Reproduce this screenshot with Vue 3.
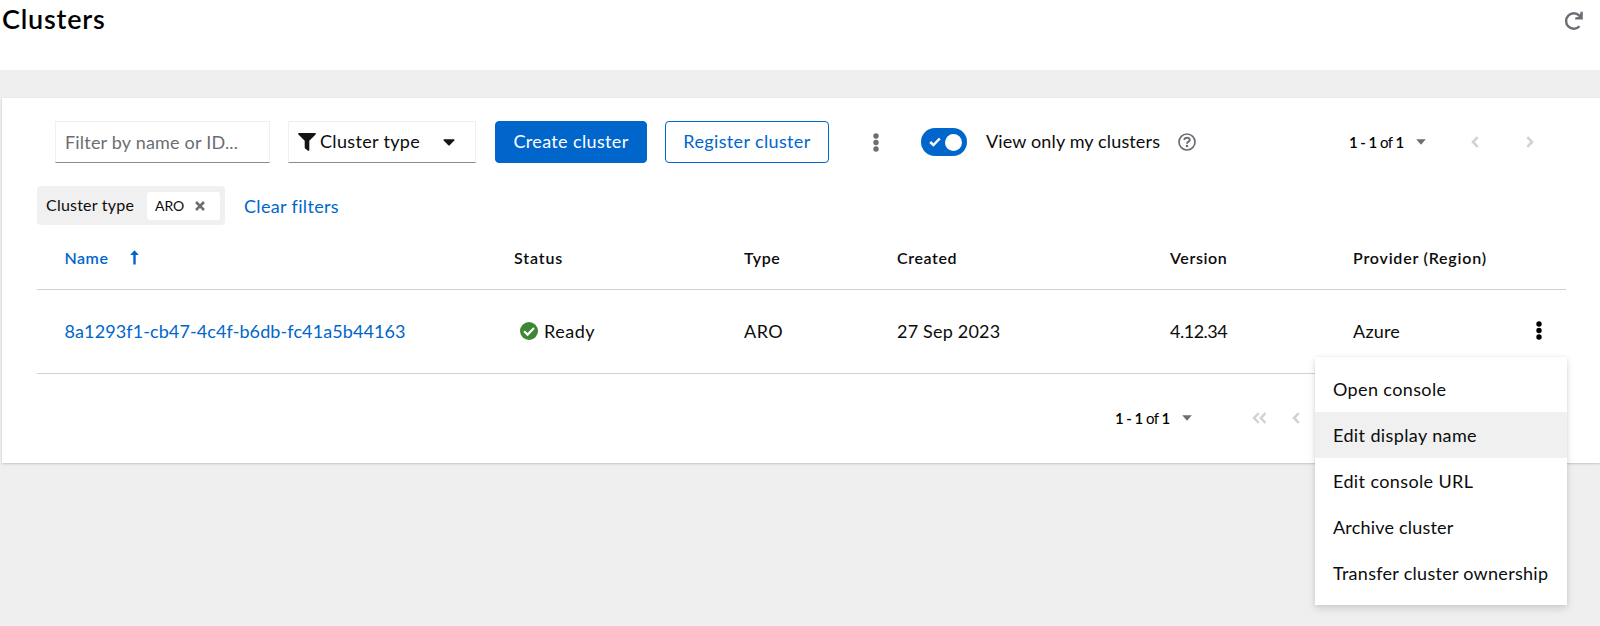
<script setup>
import { ref } from 'vue'

const filterText = ref('')
const onlyMine = ref(true)
const columns = [
  { key: 'status', label: 'Status' },
  { key: 'type', label: 'Type' },
  { key: 'created', label: 'Created' },
  { key: 'version', label: 'Version' },
  { key: 'provider', label: 'Provider (Region)' },
]
const clusters = [
  {
    name: '8a1293f1-cb47-4c4f-b6db-fc41a5b44163',
    status: 'Ready',
    type: 'ARO',
    created: '27 Sep 2023',
    version: '4.12.34',
    provider: 'Azure',
  },
]
const actions = [
  { label: 'Open console', key: 'open' },
  { label: 'Edit display name', key: 'rename', active: true },
  { label: 'Edit console URL', key: 'url' },
  { label: 'Archive cluster', key: 'archive' },
  { label: 'Transfer cluster ownership', key: 'transfer' },
]
</script>

<template>
  <div class="page">
    <header class="page-header">
      <h1>Clusters</h1>
      <button class="icon-btn refresh" aria-label="Refresh">
        <svg width="20" height="20" viewBox="0 0 20 20">
          <path d="M15.5 15.2A7.7 7.7 0 1 1 15.3 4.6L17 6.2" fill="none" stroke="#6a6e73" stroke-width="2.4" />
          <path d="M18.8 .8V8.4H11.2V6.6L15.6 5.6L16.6 .8Z" fill="#6a6e73" />
        </svg>
      </button>
    </header>

    <main class="card">
      <div class="toolbar">
        <input v-model="filterText" class="field filter" placeholder="Filter by name or ID..." />
        <button class="field select">
          <svg class="funnel" width="18" height="18" viewBox="0 0 18 18">
            <path d="M.9 0H17.1Q18.3 .4 17.6 1.4L11.3 7.8V17.2Q10.9 18.2 10 17.7L7.1 15.5Q6.7 15.2 6.7 14.6V7.8L.4 1.4Q-.3 .4 .9 0Z" fill="#151515" />
          </svg>
          <span>Cluster type</span>
          <svg class="select-caret" width="12" height="7" viewBox="0 0 12 7"><path d="M1 .2H11Q12 .6 11.3 1.4L6.7 6.2Q6 6.9 5.3 6.2L.7 1.4Q0 .6 1 .2Z" fill="#151515" /></svg>
        </button>
        <button class="btn primary">Create cluster</button>
        <button class="btn secondary">Register cluster</button>
        <button class="icon-btn tool-kebab" aria-label="More">
          <svg width="6" height="19" viewBox="0 0 6 19" fill="#6a6e73"><circle cx="3" cy="3" r="2.7" /><circle cx="3" cy="9.5" r="2.7" /><circle cx="3" cy="16" r="2.7" /></svg>
        </button>
        <button class="switch" :aria-pressed="onlyMine" aria-label="View only my clusters" @click="onlyMine = !onlyMine">
          <svg width="12" height="10" viewBox="0 0 12 10"><path d="M1.2 5L4.4 8.1L10.8 1.5" fill="none" stroke="#fff" stroke-width="2.5" /></svg>
          <span class="knob"></span>
        </button>
        <span class="switch-label">View only my clusters</span>
        <svg class="help" width="18" height="18" viewBox="0 0 18 18" fill="none" stroke="#6a6e73">
          <circle cx="9" cy="9" r="8" stroke-width="1.7" />
          <path d="M6.3 7C6.6 4.1 11.8 4 11.8 7C11.8 8.7 9 8.6 9 10.7" stroke-width="1.9" />
          <circle cx="9" cy="13" r="1.3" fill="#6a6e73" stroke="none" />
        </svg>
        <div class="pager pager-top">
          <span class="count"><b>1 - 1</b> of <b>1</b></span>
          <svg class="caret" width="10" height="6" viewBox="0 0 10 6"><path d="M.2 .2H9.8L5 5.8Z" fill="#6a6e73" /></svg>
          <svg class="prev" width="8" height="12" viewBox="0 0 8 12"><path d="M6.7 1.2L2 6L6.7 10.8" fill="none" stroke="#d2d2d2" stroke-width="2.6" /></svg>
          <svg class="next" width="8" height="12" viewBox="0 0 8 12"><path d="M1.3 1.2L6 6L1.3 10.8" fill="none" stroke="#d2d2d2" stroke-width="2.6" /></svg>
        </div>
      </div>

      <div class="filters">
        <div class="chip-group">
          <span class="chip-label">Cluster type</span>
          <span class="chip">
            <span class="chip-text">ARO</span>
            <svg width="10" height="10" viewBox="0 0 10 10"><path d="M1 1L9 9M9 1L1 9" stroke="#6a6e73" stroke-width="2.5" /></svg>
          </span>
        </div>
        <a class="clear">Clear filters</a>
      </div>

      <section class="table">
        <div class="row head">
          <span class="name sorted">
            Name
            <svg width="9" height="15" viewBox="0 0 9 15"><path d="M4.5 .2L8.4 4.4Q8.6 5.1 7.9 5.1H5.7V14.6H3.3V5.1H1.1Q.4 5.1 .6 4.4Z" fill="#06c" /></svg>
          </span>
          <span v-for="c in columns" :key="c.key" :class="'h-' + c.key">{{ c.label }}</span>
        </div>
        <div v-for="cluster in clusters" :key="cluster.name" class="row body">
          <a class="name">{{ cluster.name }}</a>
          <span class="status">
            <svg width="18" height="18" viewBox="0 0 18 18"><circle cx="9" cy="9" r="9" fill="#3e8635" /><path d="M4 9.2L7.6 12.6L14 6.1" fill="none" stroke="#fff" stroke-width="2.2" /></svg>
            {{ cluster.status }}
          </span>
          <span class="type">{{ cluster.type }}</span>
          <span>{{ cluster.created }}</span>
          <span class="version">{{ cluster.version }}</span>
          <span>{{ cluster.provider }}</span>
          <div class="row-actions">
            <button class="icon-btn" aria-label="Actions">
              <svg width="6" height="19" viewBox="0 0 6 19" fill="#000"><circle cx="3" cy="3" r="2.7" /><circle cx="3" cy="9.5" r="2.7" /><circle cx="3" cy="16" r="2.7" /></svg>
            </button>
            <ul class="menu">
              <li v-for="a in actions" :key="a.key" :class="[a.key, { active: a.active }]">{{ a.label }}</li>
            </ul>
          </div>
        </div>
      </section>

      <footer class="pager pager-bottom">
        <span class="count"><b>1 - 1</b> of <b>1</b></span>
        <svg class="caret" width="10" height="6" viewBox="0 0 10 6"><path d="M.2 .2H9.8L5 5.8Z" fill="#6a6e73" /></svg>
        <svg class="first" width="15" height="12" viewBox="0 0 15 12"><path d="M6.7 1.2L2 6L6.7 10.8M13.5 1.2L8.8 6L13.5 10.8" fill="none" stroke="#d2d2d2" stroke-width="2.4" /></svg>
        <svg class="before" width="8" height="12" viewBox="0 0 8 12"><path d="M6.7 1.2L2 6L6.7 10.8" fill="none" stroke="#d2d2d2" stroke-width="2.6" /></svg>
      </footer>
    </main>
  </div>
</template>

<style>
body { background: #efefef; }
</style>

<style scoped>
.page {
  height: 626px;
  overflow: hidden;
  background: #efefef;
  color: #0c0c0c;
  font-family: Lato, "Open Sans", sans-serif;
  font-size: 18px;
  letter-spacing: 0.2px;
}
.page * { box-sizing: border-box; }
button, input { font: inherit; letter-spacing: inherit; color: inherit; margin: 0; }
svg { flex: none; display: block; }
.page-header {
  display: flex;
  justify-content: space-between;
  height: 70px;
  padding: 4px 16px 0 2px;
  background: #fff;
}
h1 { margin: 0; font-size: 27px; line-height: 30px; font-weight: 600; letter-spacing: 0.8px; color: #000; }
.icon-btn { display: block; border: 0; padding: 0; background: none; }
.refresh { height: 20px; margin-top: 7px; }
.card {
  height: 365px;
  margin: 28px 0 0 2px;
  padding: 23px 0 0 35px;
  background: #fff;
  box-shadow: 0 1px 2px rgba(0, 0, 0, 0.16), 0 0 2px rgba(0, 0, 0, 0.05);
}
.toolbar { display: flex; align-items: center; height: 42px; padding-left: 18px; }
.field { height: 42px; border: 1px solid #f0f0f0; border-bottom-color: #8a8d90; background: #fff; }
.filter { width: 215px; padding: 0 9px 1px; outline: none; letter-spacing: 0.2px; }
.filter::placeholder { color: #6a6e73; opacity: 1; }
.select {
  display: flex;
  align-items: center;
  width: 188px;
  margin-left: 18px;
  padding: 0 20px 0 9px;
  letter-spacing: 0.33px;
}
.select span { margin-bottom: 2px; }
.funnel { margin: -1px 4px 0 0; }
.select-caret { margin-left: auto; }
.btn { height: 42px; border-radius: 4px; padding: 0 0 2px; letter-spacing: 0.36px; }
.primary { width: 152px; margin-left: 19px; border: 1px solid #06c; background: #06c; color: #fff; }
.secondary { width: 164px; margin-left: 18px; border: 1px solid #06c; background: #fff; color: #06c; }
.tool-kebab { margin: 0 0 0 43.5px; }
.switch {
  display: flex;
  align-items: center;
  justify-content: space-between;
  width: 46px;
  height: 28px;
  margin-left: 42.5px;
  padding: 0 5px 0 8px;
  border: 0;
  border-radius: 14px;
  background: #06c;
}
.knob { width: 17px; height: 17px; border-radius: 50%; background: #fff; }
.switch-label { margin: -2px 0 0 19px; width: 174px; letter-spacing: 0.14px; white-space: nowrap; }
.help { margin: -1px 0 0 18px; }
.pager { display: flex; align-items: center; }
.count { width: 56px; font-size: 15px; letter-spacing: -0.55px; white-space: nowrap; color: #000; }
.count b { font-weight: 600; }
.caret { margin-left: 10.5px; }
.pager-top { margin-left: 153px; }
.prev { margin-left: 45px; }
.next { margin-left: 47px; }
.filters { display: flex; align-items: center; height: 39px; margin-top: 23px; }
.chip-group {
  display: flex;
  align-items: center;
  width: 188px;
  height: 39px;
  padding: 0 5px 0 9px;
  border-radius: 4px;
  background: #f0f0f0;
}
.chip-label { font-size: 16px; letter-spacing: 0.22px; margin-bottom: 3px; }
.chip {
  display: flex;
  align-items: center;
  justify-content: space-between;
  width: 73px;
  height: 28px;
  margin-left: auto;
  padding: 0 15px 0 8px;
  border-radius: 3px;
  background: #fff;
  font-size: 14px;
  letter-spacing: -0.1px;
}
.clear { margin: 0 0 0 19px; color: #06c; letter-spacing: 0.34px; }
.table { width: 1529px; margin-top: 3px; }
.row {
  display: grid;
  grid-template-columns: 449px 230px 153px 273px 183px 181px 1fr;
  align-items: center;
  padding: 0 0 2px 28px;
  border-bottom: 1px solid #d2d2d2;
}
.head { height: 62px; font-size: 16px; font-weight: 600; letter-spacing: 0.6px; }
.body { height: 84px; }
.name { margin-left: -0.5px; }
.h-provider { letter-spacing: 0.78px; }
.h-status { letter-spacing: 0.85px; }
.sorted { display: flex; align-items: center; gap: 22px; color: #06c; letter-spacing: 0.5px; }
.body .name { color: #06c; letter-spacing: 0.1px; }
.status { display: flex; align-items: center; gap: 6px; padding-left: 6px; letter-spacing: 0.5px; }
.status svg { position: relative; top: 0.5px; }
.type { letter-spacing: 0.5px; }
.version { letter-spacing: -0.5px; }
.row-actions { position: relative; width: 6px; height: 19px; margin-left: 2px; }
.menu {
  position: absolute;
  z-index: 2;
  top: 36px;
  right: -25px;
  width: 252px;
  height: 248px;
  margin: 0;
  padding: 9px 0;
  list-style: none;
  background: #fff;
  box-shadow: 0 4px 8px rgba(0, 0, 0, 0.12), 0 0 4px rgba(0, 0, 0, 0.08);
}
.menu li { height: 46px; padding-left: 18px; line-height: 46px; letter-spacing: 0.38px; white-space: nowrap; }
.menu .archive { letter-spacing: 0.2px; }
.menu .transfer { letter-spacing: 0.28px; }
.menu .active { background: #f0f0f0; }
.pager-bottom { height: 88px; padding-left: 1078px; }
.pager-bottom .count { margin-bottom: 1px; }
.first { margin-left: 60px; }
.before { margin-left: 25px; }
</style>
